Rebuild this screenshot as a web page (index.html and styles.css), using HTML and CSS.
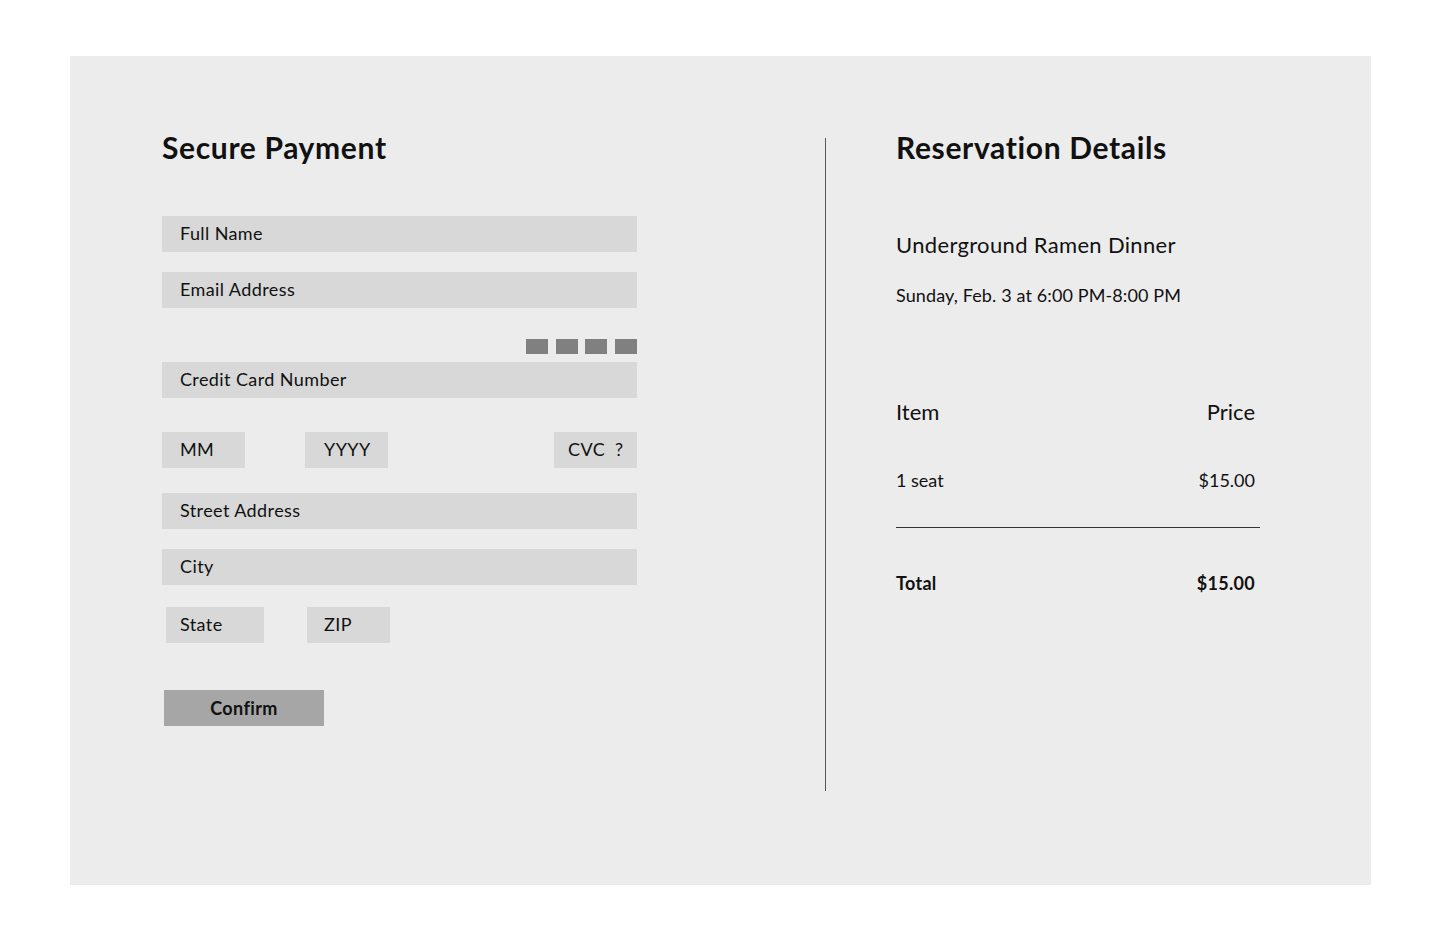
FILE: index.html
```html
<!DOCTYPE html>
<html lang="en">
<head>
<meta charset="utf-8">
<title>Secure Payment</title>
<link rel="stylesheet" href="styles.css">
</head>
<body>
<main class="panel">
  <section class="pay">
    <h1 class="title">Secure Payment</h1>
    <div class="field field-name">Full Name</div>
    <div class="field field-email">Email Address</div>
    <div class="cards">
      <span class="card"></span><span class="card"></span><span class="card"></span><span class="card"></span>
    </div>
    <div class="field field-cc">Credit Card Number</div>
    <div class="row-exp">
      <div class="field small">MM</div>
      <div class="field small yyyy">YYYY</div>
      <div class="field small cvc">CVC&nbsp;&nbsp;?</div>
    </div>
    <div class="field field-street">Street Address</div>
    <div class="field field-city">City</div>
    <div class="row-state">
      <div class="field state">State</div>
      <div class="field small zip">ZIP</div>
    </div>
    <button class="confirm" type="button">Confirm</button>
  </section>
  <div class="divider"></div>
  <section class="details">
    <h1 class="title">Reservation Details</h1>
    <p class="event">Underground Ramen Dinner</p>
    <p class="date">Sunday, Feb. 3 at 6:00 PM-8:00 PM</p>
    <div class="line head"><span>Item</span><span>Price</span></div>
    <div class="line item"><span>1 seat</span><span>$15.00</span></div>
    <div class="rule"></div>
    <div class="line total"><span>Total</span><span>$15.00</span></div>
  </section>
</main>
</body>
</html>
```
FILE: styles.css
```css
* { box-sizing: border-box; }
html, body { margin: 0; padding: 0; background: #ffffff; }
body {
  font-family: "Lato", "Noto Sans", sans-serif;
  color: #111111;
}
.panel {
  margin: 56px 0 0 70px;
  width: 1301px;
  height: 829px;
  background: #ececec;
  display: flex;
  align-items: flex-start;
}
.pay {
  width: 475px;
  margin-left: 92px;
  padding-top: 73px;
  display: flex;
  flex-direction: column;
}
.title {
  margin: 0;
  font-size: 30px;
  line-height: 36px;
  font-weight: 700;
  letter-spacing: 0.65px;
}
.field {
  height: 36px;
  background: #d8d8d8;
  font-size: 18px;
  line-height: 35px;
  padding-left: 18px;
  letter-spacing: 0.4px;
  white-space: nowrap;
}
.field-name { margin-top: 51px; }
.field-email { margin-top: 20px; }
.cards {
  margin-top: 31px;
  display: flex;
  justify-content: flex-end;
  gap: 7.6px;
  height: 15px;
}
.card {
  width: 22px;
  height: 15px;
  background: #808080;
}
.field-cc { margin-top: 8px; }
.row-exp {
  margin-top: 34px;
  display: flex;
  justify-content: space-between;
}
.small { width: 83px; }
.yyyy { margin-left: 60px; margin-right: auto; padding-left: 19px; }
.cvc { padding-left: 14px; }
.field-street { margin-top: 25px; }
.field-city { margin-top: 20px; }
.row-state {
  margin-top: 22px;
  display: flex;
  padding-left: 4px;
}
.state { width: 98px; padding-left: 14px; }
.zip { margin-left: 43px; padding-left: 17px; }
.confirm {
  margin: 47px 0 0 2px;
  width: 160px;
  height: 36px;
  border: 0;
  border-radius: 0;
  background: #a6a6a6;
  font-family: inherit;
  font-size: 18px;
  font-weight: 700;
  letter-spacing: 0.4px;
  color: #111111;
  padding: 0;
  cursor: pointer;
}
.divider {
  width: 1px;
  height: 653px;
  margin-top: 82px;
  margin-left: 188px;
  background: #555555;
}
.details {
  width: 364px;
  margin-left: 70px;
  padding-top: 73px;
}
.event {
  margin: 65px 0 0;
  font-size: 22px;
  line-height: 30px;
  letter-spacing: 0.33px;
}
.date {
  margin: 23px 0 0;
  font-size: 18px;
  line-height: 24px;
  letter-spacing: 0.12px;
}
.line {
  display: flex;
  justify-content: space-between;
  padding-right: 5px;
}
.head {
  margin-top: 91px;
  font-size: 22px;
  line-height: 28px;
}
.item {
  margin-top: 42px;
  font-size: 18px;
  line-height: 24px;
}
.rule {
  margin-top: 35px;
  height: 1px;
  background: #333333;
}
.total {
  margin-top: 43px;
  font-size: 18px;
  line-height: 24px;
  font-weight: 700;
  letter-spacing: 0.3px;
}
```
